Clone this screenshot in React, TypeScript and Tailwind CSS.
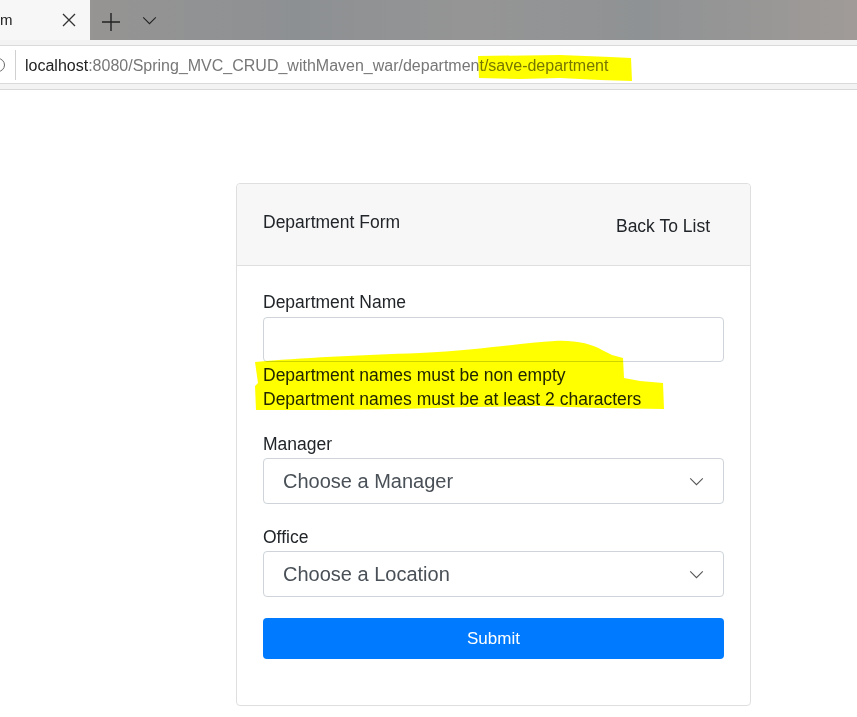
import React from 'react';

const ChevronDown = ({ className }: { className?: string }) => (
  <svg viewBox="0 0 16 10" className={className} fill="none" stroke="currentColor" strokeWidth="1.2">
    <path d="M1 1.5 L8 8.5 L15 1.5" />
  </svg>
);

const SelectBox: React.FC<{ placeholder: string }> = ({ placeholder }) => (
  <div className="flex h-[46px] items-center justify-between rounded-[4px] border border-[#ced4da] bg-white pl-[19px] pr-[19px]">
    <span className="text-[20px] text-[#495057]">{placeholder}</span>
    <ChevronDown className="w-[15px] h-[9px] text-[#555]" />
  </div>
);

export default function App() {
  return (
    <div className="relative min-h-[717px] overflow-hidden bg-white font-['Liberation_Sans',Arial,sans-serif] text-[#212529]">
      {/* tab strip */}
      <div className="flex h-10 bg-[linear-gradient(90deg,#a49896_0%,#959493_12%,#8d9093_35%,#959595_55%,#8f9294_75%,#a09b98_100%)]">
        <div className="flex w-[90px] items-center bg-[#f7f7f7] pr-[14px]">
          <span className="text-[15px] text-[#222]">m</span>
          <svg viewBox="0 0 14 14" className="ml-auto h-[14px] w-[14px]" stroke="#333" strokeWidth="1.3">
            <path d="M1 1 L13 13 M13 1 L1 13" />
          </svg>
        </div>
        <div className="flex items-center gap-[22px] pl-[12px]">
          <svg viewBox="0 0 18 18" className="mt-[3px] h-[18px] w-[18px]" stroke="#222" strokeWidth="1.4">
            <path d="M9 0 V18 M0 9 H18" />
          </svg>
          <ChevronDown className="w-[15px] h-[9px] text-[#222]" />
        </div>
      </div>

      {/* address bar */}
      <div className="h-[50px] border-b border-[#d8d8d8] bg-[#f3f3f3] pt-[5px]">
        <div className="flex h-[39px] items-center border-y border-[#dadada] bg-white">
          <div className="-ml-[9px] h-[14px] w-[14px] rounded-full border-[1.5px] border-[#666]" />
          <div className="ml-[10px] h-[30px] w-px bg-[#d0d0d0]" />
          <div className="ml-[9px] mt-[3px] text-[16px]">
            <span className="text-[#222]">localhost</span>
            <span className="text-[#777]">:8080/Spring_MVC_CRUD_withMaven_war/department/save-department</span>
          </div>
        </div>
      </div>

      {/* page */}
      <div className="pl-[236px] pt-[93px]">
        <div className="w-[515px] rounded-[4px] border border-[#dfdfdf] bg-white">
          <div className="flex h-[82px] justify-between rounded-t-[4px] border-b border-[#dfdfdf] bg-[#f7f7f7] pl-[26px] pr-[40px] pt-[26px]">
            <span className="text-[17.5px] leading-6">Department Form</span>
            <span className="mt-[4px] text-[17.5px] leading-6">Back To List</span>
          </div>

          <div className="px-[26px] pb-[46px] pt-[24px] text-[17.5px] leading-6">
            <div className="mb-[3px]">Department Name</div>
            <div className="h-[45px] rounded-[4px] border border-[#ced4da] bg-white" />
            <div className="mt-px">Department names must be non empty</div>
            <div>Department names must be at least 2 characters</div>

            <div className="mb-[2px] mt-[21px]">Manager</div>
            <SelectBox placeholder="Choose a Manager" />

            <div className="mb-[2px] mt-[21px]">Office</div>
            <SelectBox placeholder="Choose a Location" />

            <button className="mt-[21px] h-[41px] w-full rounded-[4px] bg-[#007bff] text-[17px] text-white">
              Submit
            </button>
          </div>
        </div>
      </div>

      {/* highlighter marks drawn over the screenshot */}
      <svg
        className="pointer-events-none absolute left-0 top-0 mix-blend-multiply"
        width="857"
        height="717"
        viewBox="0 0 857 717"
      >
        <path
          fill="#ffff00"
          d="M478,56 L560,55 L610,57 L631,58 L632,81 L600,80 L560,78 L520,79 L479,78 Z"
        />
        <path
          fill="#ffff00"
          d="M255,362 C300,358 360,355 420,353 C480,350 520,343 555,341 C575,340 592,344 602,350 L612,355 L623,358 L624,378 L640,381 L663,383 L664,409 L600,408 L540,406 L470,407 L400,409 L330,410 L256,410 L255,386 L258,383 Z"
        />
      </svg>
    </div>
  );
}
